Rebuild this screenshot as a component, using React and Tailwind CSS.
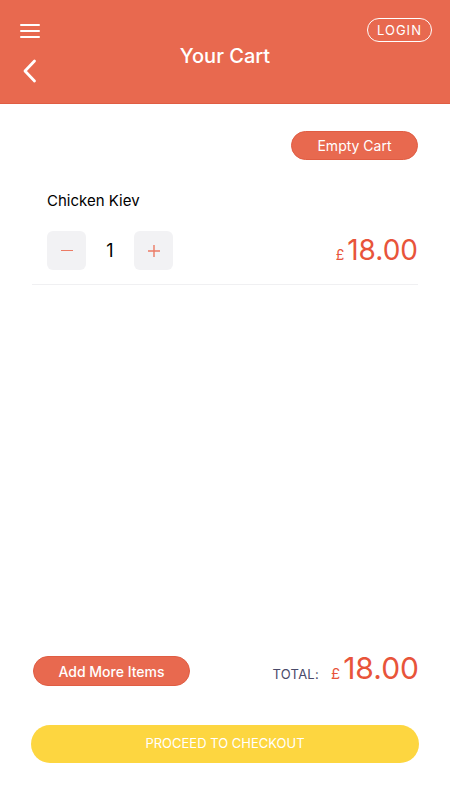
import React, { useState } from 'react';

const CartPage = () => {
  const [qty, setQty] = useState(1);
  const price = 18;
  const total = (price * qty).toFixed(2);

  return (
    <div className="h-[800px] w-full bg-white flex flex-col" style={{ fontFamily: 'Inter, "Noto Sans", sans-serif' }}>
      {/* Header */}
      <div className="h-[104px] bg-[#e8694f] border-b border-[#e05d43] flex justify-between px-5 pt-[18px]">
        <div className="flex flex-col gap-[21px] w-[70px]">
          <button className="flex flex-col gap-[4px] w-5 mt-[6px]">
            <span className="block h-[2px] w-5 bg-white rounded"></span>
            <span className="block h-[2px] w-5 bg-white rounded"></span>
            <span className="block h-[2px] w-5 bg-white rounded"></span>
          </button>
          <button className="w-5 pl-[2px]">
            <svg width="16" height="24" viewBox="0 0 16 24" fill="none" stroke="white" strokeWidth="2.8" strokeLinecap="round" strokeLinejoin="round">
              <path d="M12.5 2 L3 12 L12.5 22" />
            </svg>
          </button>
        </div>
        <h1 className="text-white text-[20px] font-medium mt-[23px]">Your Cart</h1>
        <div className="w-[70px] flex justify-end">
          <button className="h-[24px] px-[9px] rounded-full border border-white text-white text-[13px] tracking-[0.08em] leading-none -mr-[2px]">
            LOGIN
          </button>
        </div>
      </div>

      {/* Cart body */}
      <div className="flex-1 flex flex-col px-[32px]">
        <div className="flex justify-end pt-[27px]">
          <button className="h-[29px] w-[127px] rounded-full bg-[#e8694f] border border-[#e05d43] text-white text-[14px]">
            Empty Cart
          </button>
        </div>

        <div className="border-b border-[#f0f0f2] pl-[15px] pb-[14px]">
          <p className="text-black text-[15px] mt-[31px] leading-[20px]">Chicken Kiev</p>
          <div className="flex items-center justify-between mt-[20px]">
            <div className="flex items-center">
              <button onClick={() => setQty(Math.max(1, qty - 1))} className="w-[39px] h-[39px] rounded-md bg-[#f2f2f4] flex items-center justify-center">
                <span className="block w-[12px] h-[1.5px] bg-[#ec7b64]"></span>
              </button>
              <span className="w-[48px] text-center text-[18px] text-black">{qty}</span>
              <button onClick={() => setQty(qty + 1)} className="w-[39px] h-[39px] rounded-md bg-[#f2f2f4] flex items-center justify-center">
                <svg width="12" height="12" viewBox="0 0 12 12" stroke="#ec7b64" strokeWidth="1.4">
                  <path d="M6 0 V12 M0 6 H12" />
                </svg>
              </button>
            </div>
            <div className="flex items-baseline text-[#e8543a]">
              <span className="text-[14px] mr-[3px]">£</span>
              <span className="text-[28px] leading-none">{(price * qty).toFixed(2)}</span>
            </div>
          </div>
        </div>
      </div>

      {/* Footer */}
      <div className="px-[31px] pb-[37px]">
        <div className="flex items-center justify-between pl-[2px]">
          <button className="h-[30px] w-[157px] rounded-full bg-[#e8694f] border border-[#e05d43] text-white text-[14px] font-medium">
            Add More Items
          </button>
          <div className="flex items-baseline -mt-[4px]">
            <span className="text-[#4a4a6a] text-[13px] tracking-[0.02em] mr-[12px]">TOTAL:</span>
            <span className="text-[#e8543a] text-[15px] mr-[3px]">£</span>
            <span className="text-[#e8543a] text-[30px] leading-none">{total}</span>
          </div>
        </div>
        <button className="mt-[39px] w-full h-[38px] rounded-full bg-[#fdd640] text-white text-[13px]">
          PROCEED TO CHECKOUT
        </button>
      </div>
    </div>
  );
};

export default CartPage;
